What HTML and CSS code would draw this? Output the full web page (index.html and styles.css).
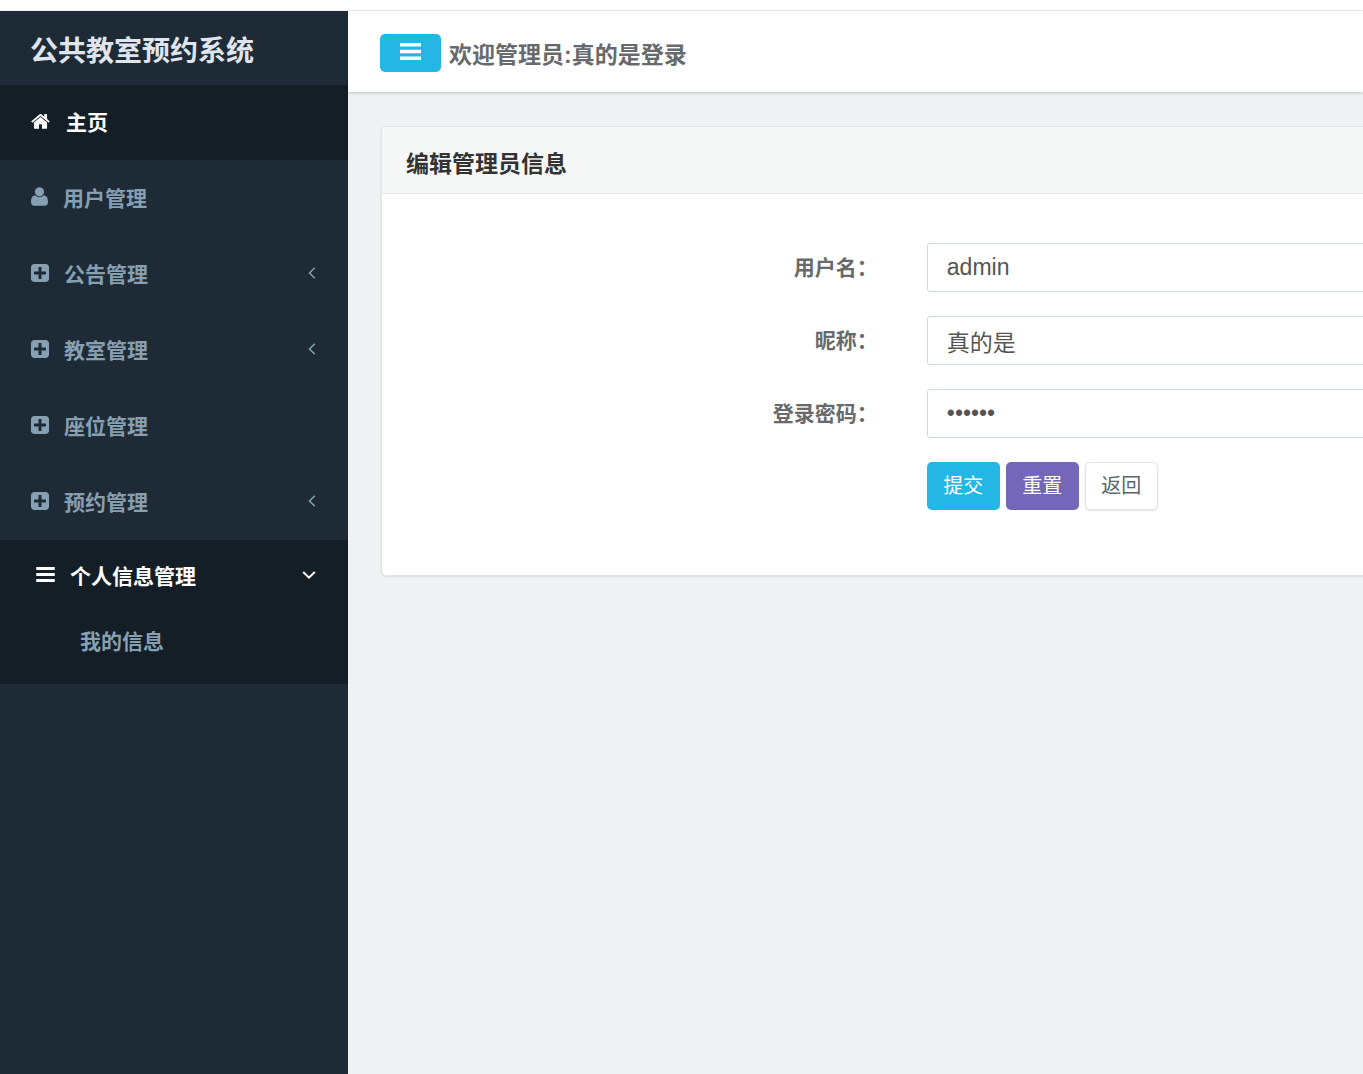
FILE: index.html
```html
<!DOCTYPE html>
<html lang="zh-CN">
<head>
<meta charset="utf-8">
<title>公共教室预约系统</title>
<link rel="stylesheet" href="styles.css">
</head>
<body>
<svg class="sprite" aria-hidden="true">
  <symbol id="home" viewBox="64 192 1664 1344"><path d="M1472 992v480q0 26-19 45t-45 19h-384v-384h-256v384h-384q-26 0-45-19t-19-45v-480q0-1 .5-3t.5-3l575-474 575 474q1 2 1 6zm223-69l-62 74q-8 9-21 11h-3q-13 0-21-7l-692-577-692 577q-12 8-24 7-13-2-21-11l-62-74q-8-10-7-23.500t11-21.500l719-599q32-26 76-26t76 26l244 204v-195q0-14 9-23t23-9h192q14 0 23 9t9 23v408l219 182q10 8 11 21.500t-7 23.500z"/></symbol>
  <symbol id="user" viewBox="0 0 17 19"><circle cx="8.500" cy="4.800" r="4.600"/><path d="M4.200 8.200Q6 10.300 8.500 10.300T12.800 8.200C15.800 8.400 17 11.400 17 15Q17 18.700 13.600 18.700H3.400Q0 18.700 0 15C0 11.400 1.200 8.400 4.200 8.200Z"/></symbol>
  <symbol id="plus" viewBox="128 128 1536 1536"><path d="M1408 960v-128q0-26-19-45t-45-19h-320v-320q0-26-19-45t-45-19h-128q-26 0-45 19t-19 45v320h-320q-26 0-45 19t-19 45v128q0 26 19 45t45 19h320v320q0 26 19 45t45 19h128q26 0 45-19t19-45v-320h320q26 0 45-19t19-45zm256-544v960q0 119-84.500 203.500t-203.500 84.500h-960q-119 0-203.500-84.500t-84.500-203.500v-960q0-119 84.500-203.500t203.500-84.500h960q119 0 203.500 84.500t84.500 203.500z"/></symbol>
  <symbol id="bars" viewBox="0 0 21 17"><path d="M0 0H21V3.400H0ZM0 6.800H21V10.200H0ZM0 13.600H21V17H0Z"/></symbol>
  <symbol id="left" viewBox="0 0 8 12"><path d="M6.800 .7 1.500 6 6.800 11.300" fill="none" stroke="currentColor" stroke-width="1.500"/></symbol>
  <symbol id="down" viewBox="0 0 14 8"><path d="M1.200 1 7 6.600 12.800 1" fill="none" stroke="currentColor" stroke-width="2"/></symbol>
</svg>
<div class="layout">
  <aside class="sidebar">
    <h1 class="brand">公共教室预约系统</h1>
    <nav>
      <ul class="menu">
        <li><a class="item active first" href="#"><svg class="icon home"><use href="#home"/></svg>主页</a></li>
        <li><a class="item" href="#"><svg class="icon user"><use href="#user"/></svg>用户管理</a></li>
        <li><a class="item" href="#"><svg class="icon"><use href="#plus"/></svg>公告管理<svg class="arrow"><use href="#left"/></svg></a></li>
        <li><a class="item" href="#"><svg class="icon"><use href="#plus"/></svg>教室管理<svg class="arrow"><use href="#left"/></svg></a></li>
        <li><a class="item" href="#"><svg class="icon"><use href="#plus"/></svg>座位管理</a></li>
        <li><a class="item" href="#"><svg class="icon"><use href="#plus"/></svg>预约管理<svg class="arrow"><use href="#left"/></svg></a></li>
        <li class="group">
          <a class="item active nested" href="#"><svg class="icon bars"><use href="#bars"/></svg>个人信息管理<svg class="arrow open"><use href="#down"/></svg></a>
          <ul class="submenu"><li><a href="#">我的信息</a></li></ul>
        </li>
      </ul>
    </nav>
  </aside>
  <div class="page">
    <header class="topbar">
      <button class="toggle" type="button" aria-label="菜单"><svg><use href="#bars"/></svg></button>
      <span>欢迎管理员:真的是登录</span>
    </header>
    <main class="content">
      <section class="panel">
        <h2 class="panel-title">编辑管理员信息</h2>
        <form class="form">
          <label for="username">用户名：</label>
          <input id="username" type="text" value="admin">
          <label for="nickname">昵称：</label>
          <input id="nickname" type="text" value="真的是">
          <label for="password">登录密码：</label>
          <input id="password" type="password" value="123456">
          <div class="actions">
            <button class="btn primary" type="button">提交</button>
            <button class="btn reset" type="reset">重置</button>
            <button class="btn plain" type="button">返回</button>
          </div>
        </form>
      </section>
    </main>
  </div>
</div>
</body>
</html>
```
FILE: styles.css
```css
* {
  box-sizing: border-box;
}

body {
  margin: 0;
  padding-top: 10px;
  background: #fff;
  color: #676a6c;
  font-family: "Liberation Sans", "Noto Sans CJK SC", sans-serif;
  font-size: 21px;
  overflow: hidden;
}

button,
input {
  font-family: inherit;
}

a {
  color: inherit;
  text-decoration: none;
}

ul {
  margin: 0;
  padding: 0;
  list-style: none;
}

svg {
  fill: currentColor;
}

.sprite {
  display: none;
}

.layout {
  display: flex;
  min-height: calc(100vh - 10px);
  border-top: 1px solid #eee;
}

.sidebar {
  flex: none;
  width: 348px;
  background: #1e2b36;
  color: #869fb1;
  font-weight: bold;
}

.brand {
  height: 74px;
  margin: 0;
  padding: 4px 30px 0;
  color: #dfe4ed;
  font-size: 28px;
  line-height: 74px;
}

.item {
  display: flex;
  align-items: center;
  height: 76px;
  padding: 0 32px 3px 31px;
}

.first {
  height: 75px;
}

.active {
  background: #141e26;
  color: #fff;
}

.icon {
  width: 18px;
  height: 18px;
  margin-right: 15px;
}

.icon.home {
  width: 19px;
  height: 16px;
  margin-right: 16px;
}

.icon.user {
  width: 17px;
  height: 19px;
}

.icon.bars {
  width: 19px;
  height: 15px;
}

.arrow {
  width: 8px;
  height: 12px;
  margin-left: auto;
}

.arrow.open {
  width: 14px;
  height: 8px;
}

.nested {
  height: 72px;
  padding-left: 36px;
}

.group {
  padding-bottom: 12px;
  background: #141e26;
}

.submenu a {
  display: block;
  padding-left: 80px;
  line-height: 60px;
}

.page {
  flex: 1;
  min-width: 0;
  background: #eef2f3;
}

.topbar {
  display: flex;
  align-items: center;
  gap: 8px;
  height: 81px;
  padding: 2px 32px 0;
  background: #fff;
  box-shadow: 0 1px 3px rgba(0, 0, 0, 0.2);
  font-size: 23px;
  font-weight: bold;
}

.toggle {
  display: flex;
  align-items: center;
  justify-content: center;
  width: 61px;
  height: 38px;
  padding: 0 0 2px;
  border: 0;
  border-radius: 5px;
  background: #24b7e5;
  color: #fff;
}

.toggle svg {
  width: 21px;
  height: 17px;
}

/* The panel runs past the right edge of the viewport. */
.content {
  padding: 34px 0 34px 33px;
  margin-right: -33px;
}

.panel {
  border: 1px solid #dde6e9;
  border-radius: 5px;
  background: #fff;
  box-shadow: 0 1px 2px rgba(0, 0, 0, 0.1);
}

.panel-title {
  height: 67px;
  margin: 0;
  padding: 4px 24px 0;
  border-bottom: 1px solid #e5e8ea;
  border-radius: 5px 5px 0 0;
  background: #f6f8f8;
  color: #333;
  font-size: 23px;
  line-height: 66px;
}

.form {
  display: grid;
  grid-template-columns: 49% 1fr;
  gap: 24px 49px;
  padding: 49px 24px 65px 22px;
}

.form label {
  height: 49px;
  font-weight: bold;
  line-height: 50px;
  text-align: right;
}

.form input {
  width: 100%;
  height: 49px;
  padding: 0 19px;
  border: 1px solid #cfdbdb;
  border-radius: 3px;
  background: #fff;
  color: #555;
  font-size: 23px;
}

.actions {
  display: flex;
  grid-column: 2;
  gap: 6px;
}

.btn {
  width: 73px;
  height: 48px;
  padding: 0 0 3px;
  border: 1px solid transparent;
  border-radius: 5px;
  color: #fff;
  font-size: 20px;
}

.primary {
  background: #24b7e5;
}

.reset {
  background: #7467b9;
}

.plain {
  border-color: #dde6e9;
  background: #fff;
  box-shadow: 0 1px 2px rgba(0, 0, 0, 0.12);
  color: #58666e;
}
```
